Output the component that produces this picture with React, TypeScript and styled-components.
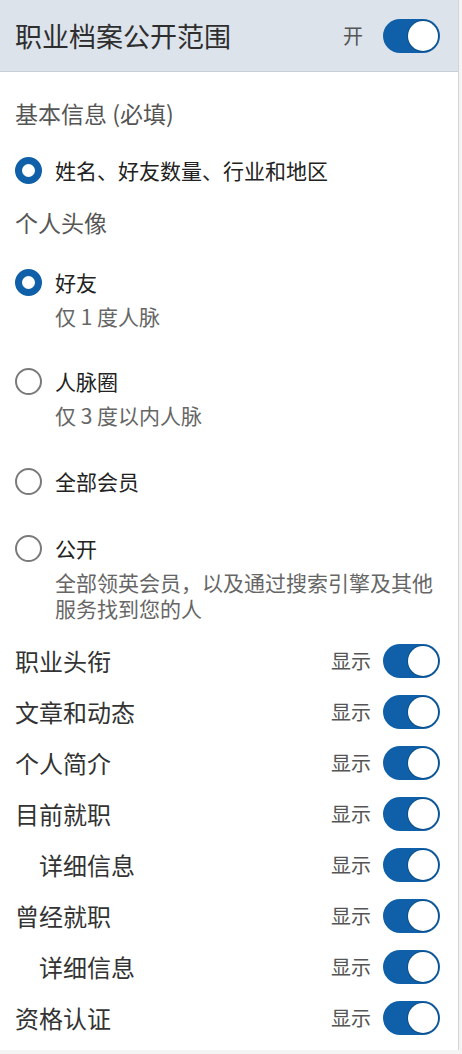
import React from 'react';
import styled, { createGlobalStyle } from 'styled-components';

const GlobalStyle = createGlobalStyle`
  html, body {
    margin: 0;
    padding: 0;
    background: #f4f4f4;
  }
  body {
    font-family: "Noto Sans CJK SC", "Noto Sans", sans-serif;
    color: #333;
  }
`;

const Panel = styled.div`
  width: 458px;
  background: #fff;
  border-right: 1px solid #d4d4d4;
  padding-bottom: 7px;
`;

const Header = styled.header`
  height: 71px;
  display: flex;
  align-items: center;
  justify-content: space-between;
  padding: 0 18px 0 15px;
  background: #dce3ea;
  border-bottom: 1px solid #c8cfd6;
`;

const Title = styled.h1`
  margin: 0;
  font-size: 27px;
  font-weight: 400;
  color: #2e2e2e;
`;

const SwitchGroup = styled.div<{ $gap: number }>`
  display: flex;
  align-items: center;
  gap: ${p => p.$gap}px;
`;

const SwitchText = styled.span`
  font-size: 20px;
  color: #555;
`;

const Track = styled.span<{ $on: boolean }>`
  width: 57px;
  height: 34px;
  border-radius: 17px;
  background: ${p => (p.$on ? '#0f60a8' : '#b8b8b8')};
  display: flex;
  align-items: center;
  justify-content: ${p => (p.$on ? 'flex-end' : 'flex-start')};
  padding: 0 2px;
  box-sizing: border-box;
`;

const Knob = styled.span`
  width: 30px;
  height: 30px;
  border-radius: 50%;
  background: #fff;
  box-shadow: 0 0 0 1px #0b4f8c;
`;

const Body = styled.div`
  display: flex;
  flex-direction: column;
  padding: 24px 0 0 15px;
`;

const SectionLabel = styled.div<{ $after: number }>`
  font-size: 23px;
  line-height: 34px;
  color: #555;
  margin-bottom: ${p => p.$after}px;
`;

const Option = styled.div<{ $after: number }>`
  display: grid;
  grid-template-columns: 27px 1fr;
  column-gap: 13px;
  margin-bottom: ${p => p.$after}px;
`;

const Radio = styled.span<{ $checked: boolean }>`
  width: 27px;
  height: 27px;
  box-sizing: border-box;
  border-radius: 50%;
  align-self: center;
  border: ${p => (p.$checked ? '7px solid #0f60a8' : '2px solid #7a7a7a')};
  background: #fff;
`;

const OptionHead = styled.div`
  display: contents;
`;

const OptionTitle = styled.div`
  font-size: 21px;
  line-height: 34px;
  color: #222;
`;

const OptionDesc = styled.div`
  grid-column: 2;
  padding-top: 4px;
  padding-right: 10px;
  font-size: 21px;
  line-height: 26px;
  color: #666;
`;

const Row = styled.div<{ $indent?: boolean }>`
  height: 51px;
  display: flex;
  align-items: center;
  justify-content: space-between;
  padding: 0 18px 0 ${p => (p.$indent ? 24 : 0)}px;
`;

const RowLabel = styled.span`
  font-size: 24px;
  color: #333;
`;

const Toggle: React.FC<{ label: string; on?: boolean; gap?: number }> = ({
  label,
  on = true,
  gap = 12,
}) => (
  <SwitchGroup $gap={gap}>
    <SwitchText>{label}</SwitchText>
    <Track $on={on}>
      <Knob />
    </Track>
  </SwitchGroup>
);

const options = [
  { title: '好友', desc: ['仅 1 度人脉'], checked: true, after: 35 },
  { title: '人脉圈', desc: ['仅 3 度以内人脉'], checked: false, after: 36 },
  { title: '全部会员', desc: [], checked: false, after: 33 },
  {
    title: '公开',
    desc: ['全部领英会员，以及通过搜索引擎及其他服务找到您的人'],
    checked: false,
    after: 14,
  },
];

const rows = [
  { label: '职业头衔' },
  { label: '文章和动态' },
  { label: '个人简介' },
  { label: '目前就职' },
  { label: '详细信息', indent: true },
  { label: '曾经就职' },
  { label: '详细信息', indent: true },
  { label: '资格认证' },
];

const App: React.FC = () => (
  <>
    <GlobalStyle />
    <Panel>
      <Header>
        <Title>职业档案公开范围</Title>
        <Toggle label="开" gap={20} />
      </Header>
      <Body>
        <SectionLabel $after={23}>基本信息 (必填)</SectionLabel>
        <Option $after={18}>
          <Radio $checked />
          <OptionTitle>姓名、好友数量、行业和地区</OptionTitle>
        </Option>
        <SectionLabel $after={26}>个人头像</SectionLabel>
        {options.map(o => (
          <Option key={o.title} $after={o.after}>
            <OptionHead>
              <Radio $checked={o.checked} />
              <OptionTitle>{o.title}</OptionTitle>
            </OptionHead>
            {o.desc.map(d => (
              <OptionDesc key={d}>{d}</OptionDesc>
            ))}
          </Option>
        ))}
        {rows.map((r, i) => (
          <Row key={i} $indent={r.indent}>
            <RowLabel>{r.label}</RowLabel>
            <Toggle label="显示" />
          </Row>
        ))}
      </Body>
    </Panel>
  </>
);

export default App;
